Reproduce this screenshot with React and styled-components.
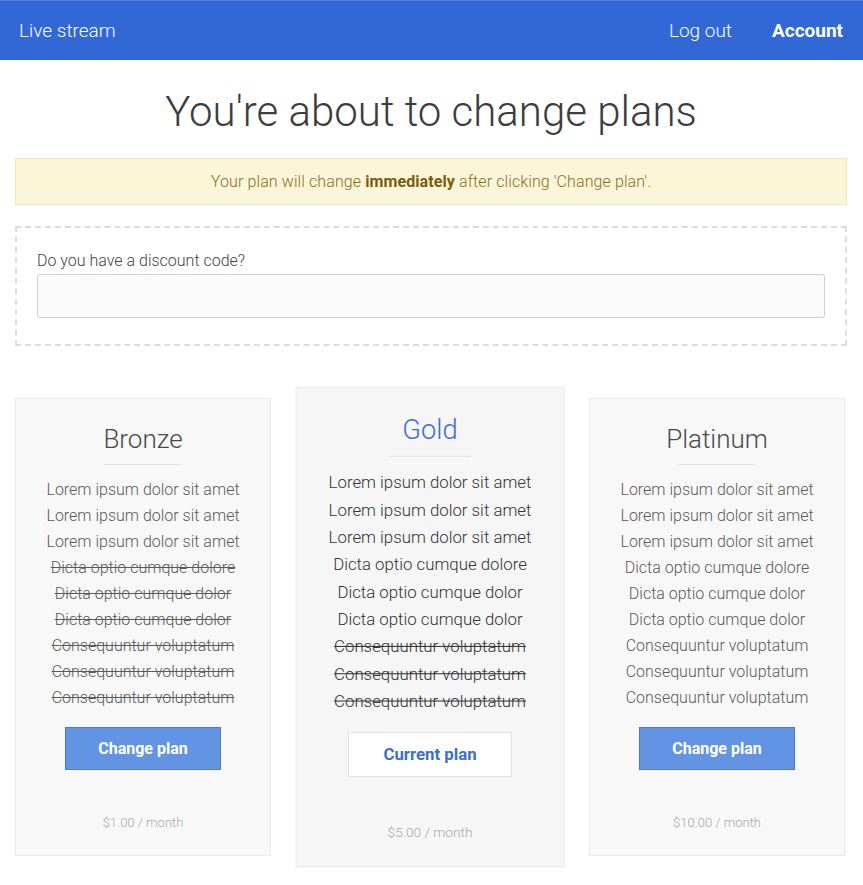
import React from "react";
import styled, { createGlobalStyle } from "styled-components";

const Global = createGlobalStyle`
  html, body { margin: 0; padding: 0; background: #fff; }
  body { font-family: Roboto, "Noto Sans", sans-serif; font-weight: 300; color: #444; }
  * { box-sizing: border-box; }
`;

const Nav = styled.nav`
  height: 60px;
  background: #3267d6;
  border-top: 1px solid #5a7fc8;
  display: flex;
  align-items: center;
  justify-content: space-between;
  padding: 0 20px 0 19px;
  color: #fff;
  font-size: 19px;
`;

const NavLinks = styled.div`
  display: flex;
  align-items: center;
  gap: 40px;
`;

const NavLink = styled.a`
  color: #fff;
  text-decoration: none;
  font-weight: ${(p) => (p.$bold ? 700 : 300)};
`;

const Main = styled.main`
  padding: 0 16px 0 15px;
`;

const Title = styled.h1`
  margin: 27px 0 21px;
  text-align: center;
  font-size: 42px;
  font-weight: 300;
  line-height: 50px;
  color: #3d3d3d;
`;

const Alert = styled.div`
  background: #fcf6d9;
  border: 1px solid #f7e7ae;
  color: #8a6d1b;
  padding: 13px 15px;
  line-height: 19px;
  font-size: 16px;
  letter-spacing: 0.1px;
  text-align: center;
  strong { font-weight: 700; color: #7a5c0c; }
`;

const Discount = styled.div`
  margin-top: 21px;
  border: 2px dashed #dcdcdc;
  padding: 23px 20px 26px;
`;

const Label = styled.label`
  display: block;
  font-size: 16px;
  line-height: 20px;
  color: #444;
  margin-bottom: 3px;
`;

const Input = styled.input`
  display: block;
  width: 100%;
  height: 44px;
  background: #fafafa;
  border: 1px solid #ccd0d4;
  border-radius: 3px;
  font: inherit;
  padding: 0 12px;
`;

const Plans = styled.div`
  display: grid;
  grid-template-columns: repeat(3, 1fr);
  gap: 31px;
  margin: 52px 2px 30px 0;
`;

const Card = styled.div`
  background: ${(p) => (p.$featured ? "#f6f6f6" : "#f8f8f8")};
  border: 1px solid #ebebeb;
  padding: 26px 10px 23px;
  text-align: center;
  transform: ${(p) => (p.$featured ? "scale(1.05)" : "none")};
  display: flex;
  flex-direction: column;
  align-items: center;
`;

const PlanName = styled.h3`
  margin: 0;
  font-size: 26px;
  line-height: 28.6px;
  font-weight: 300;
  color: ${(p) => (p.$featured ? "#3b6fd1" : "#4a4a4a")};
`;

const Rule = styled.hr`
  width: 78px;
  border: 0;
  border-top: 1px solid #e4e4e4;
  margin: 10px 0 12px;
`;

const Features = styled.ul`
  list-style: none;
  margin: 0;
  padding: 0;
`;

const Feature = styled.li`
  font-size: 16px;
  line-height: 26px;
  color: ${(p) => (p.$featured ? "#333" : "#5a5a5a")};
  text-decoration: ${(p) => (p.$off ? "line-through" : "none")};
`;

const Button = styled.button`
  margin-top: 16px;
  width: 156px;
  height: 43px;
  font-family: Roboto, sans-serif;
  font-size: 16px;
  font-weight: 700;
  cursor: pointer;
  background: ${(p) => (p.$current ? "#fff" : "#6394e4")};
  color: ${(p) => (p.$current ? "#3b6fd1" : "#fff")};
  border: 1px solid ${(p) => (p.$current ? "#e0e0e0" : "#4b7cc9")};
`;

const Price = styled.div`
  margin-top: 44px;
  font-size: 13px;
  line-height: 18px;
  color: #a8a8a8;
`;

const features = [
  "Lorem ipsum dolor sit amet",
  "Lorem ipsum dolor sit amet",
  "Lorem ipsum dolor sit amet",
  "Dicta optio cumque dolore",
  "Dicta optio cumque dolor",
  "Dicta optio cumque dolor",
  "Consequuntur voluptatum",
  "Consequuntur voluptatum",
  "Consequuntur voluptatum",
];

const plans = [
  { name: "Bronze", included: 3, price: "$1.00 / month" },
  { name: "Gold", included: 6, price: "$5.00 / month", current: true },
  { name: "Platinum", included: 9, price: "$10.00 / month" },
];

export default function App() {
  return (
    <>
      <Global />
      <Nav>
        <NavLink href="#">Live stream</NavLink>
        <NavLinks>
          <NavLink href="#">Log out</NavLink>
          <NavLink href="#" $bold>Account</NavLink>
        </NavLinks>
      </Nav>
      <Main>
        <Title>You're about to change plans</Title>
        <Alert>
          Your plan will change <strong>immediately</strong> after clicking 'Change plan'.
        </Alert>
        <Discount>
          <Label htmlFor="code">Do you have a discount code?</Label>
          <Input id="code" type="text" />
        </Discount>
        <Plans>
          {plans.map((p) => (
            <Card key={p.name} $featured={p.current}>
              <PlanName $featured={p.current}>{p.name}</PlanName>
              <Rule />
              <Features>
                {features.map((f, i) => (
                  <Feature key={i} $featured={p.current} $off={i >= p.included}>
                    {f}
                  </Feature>
                ))}
              </Features>
              <Button $current={p.current}>{p.current ? "Current plan" : "Change plan"}</Button>
              <Price>{p.price}</Price>
            </Card>
          ))}
        </Plans>
      </Main>
    </>
  );
}
